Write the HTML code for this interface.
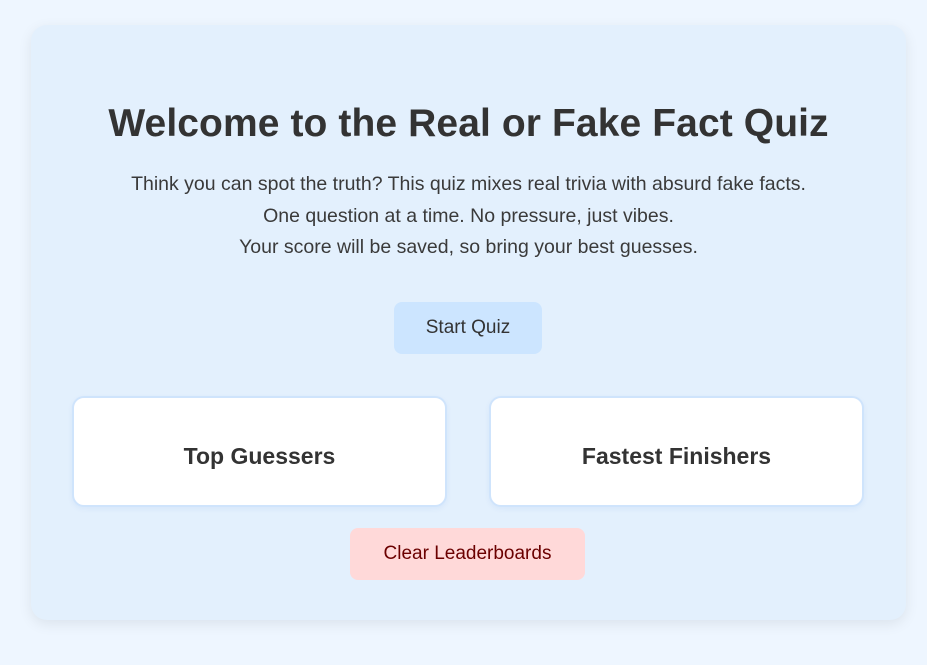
<!DOCTYPE html>
<html><head><meta charset="utf-8"><style>
html,body{margin:0;padding:0;}
body{width:927px;height:665px;background:#eef6ff;font-family:"Liberation Sans",sans-serif;color:#333;position:relative;overflow:hidden;}
.card{position:absolute;left:31px;top:25px;width:875px;height:595px;background:#e3f0fd;border-radius:16px;box-shadow:0 4px 14px rgba(0,0,0,0.08);}
h1{position:absolute;left:0;right:0;top:77px;margin:0;text-align:center;font-size:39px;font-weight:bold;color:#333;letter-spacing:0.1px;}
.p{position:absolute;left:0;right:0;top:144px;text-align:center;font-size:19.5px;line-height:31.5px;color:#3a3a3a;}
.btn{position:absolute;border-radius:8px;text-align:center;font-size:19px;font-family:"Liberation Sans",Arial,sans-serif;}
.start{left:363px;top:277px;width:148px;height:52px;line-height:52px;background:#cce5ff;color:#333;}
.clear{left:319px;top:503px;width:235px;height:52px;line-height:52px;background:#ffd9d9;color:#6b0000;}
.box{position:absolute;top:371px;width:371px;height:107px;background:#fff;border:2px solid #cfe4fc;border-radius:12px;box-shadow:0 2px 6px rgba(0,80,200,0.06);text-align:center;line-height:117px;font-size:23px;font-weight:bold;color:#333;}
</style></head><body>
<div class="card">
<h1>Welcome to the Real or Fake Fact Quiz</h1>
<div class="p">Think you can spot the truth? This quiz mixes real trivia with absurd fake facts.<br>One question at a time. No pressure, just vibes.<br>Your score will be saved, so bring your best guesses.</div>
<div class="btn start">Start Quiz</div>
<div class="box" style="left:41px">Top Guessers</div>
<div class="box" style="left:458px">Fastest Finishers</div>
<div class="btn clear">Clear Leaderboards</div>
</div>
</body></html>
